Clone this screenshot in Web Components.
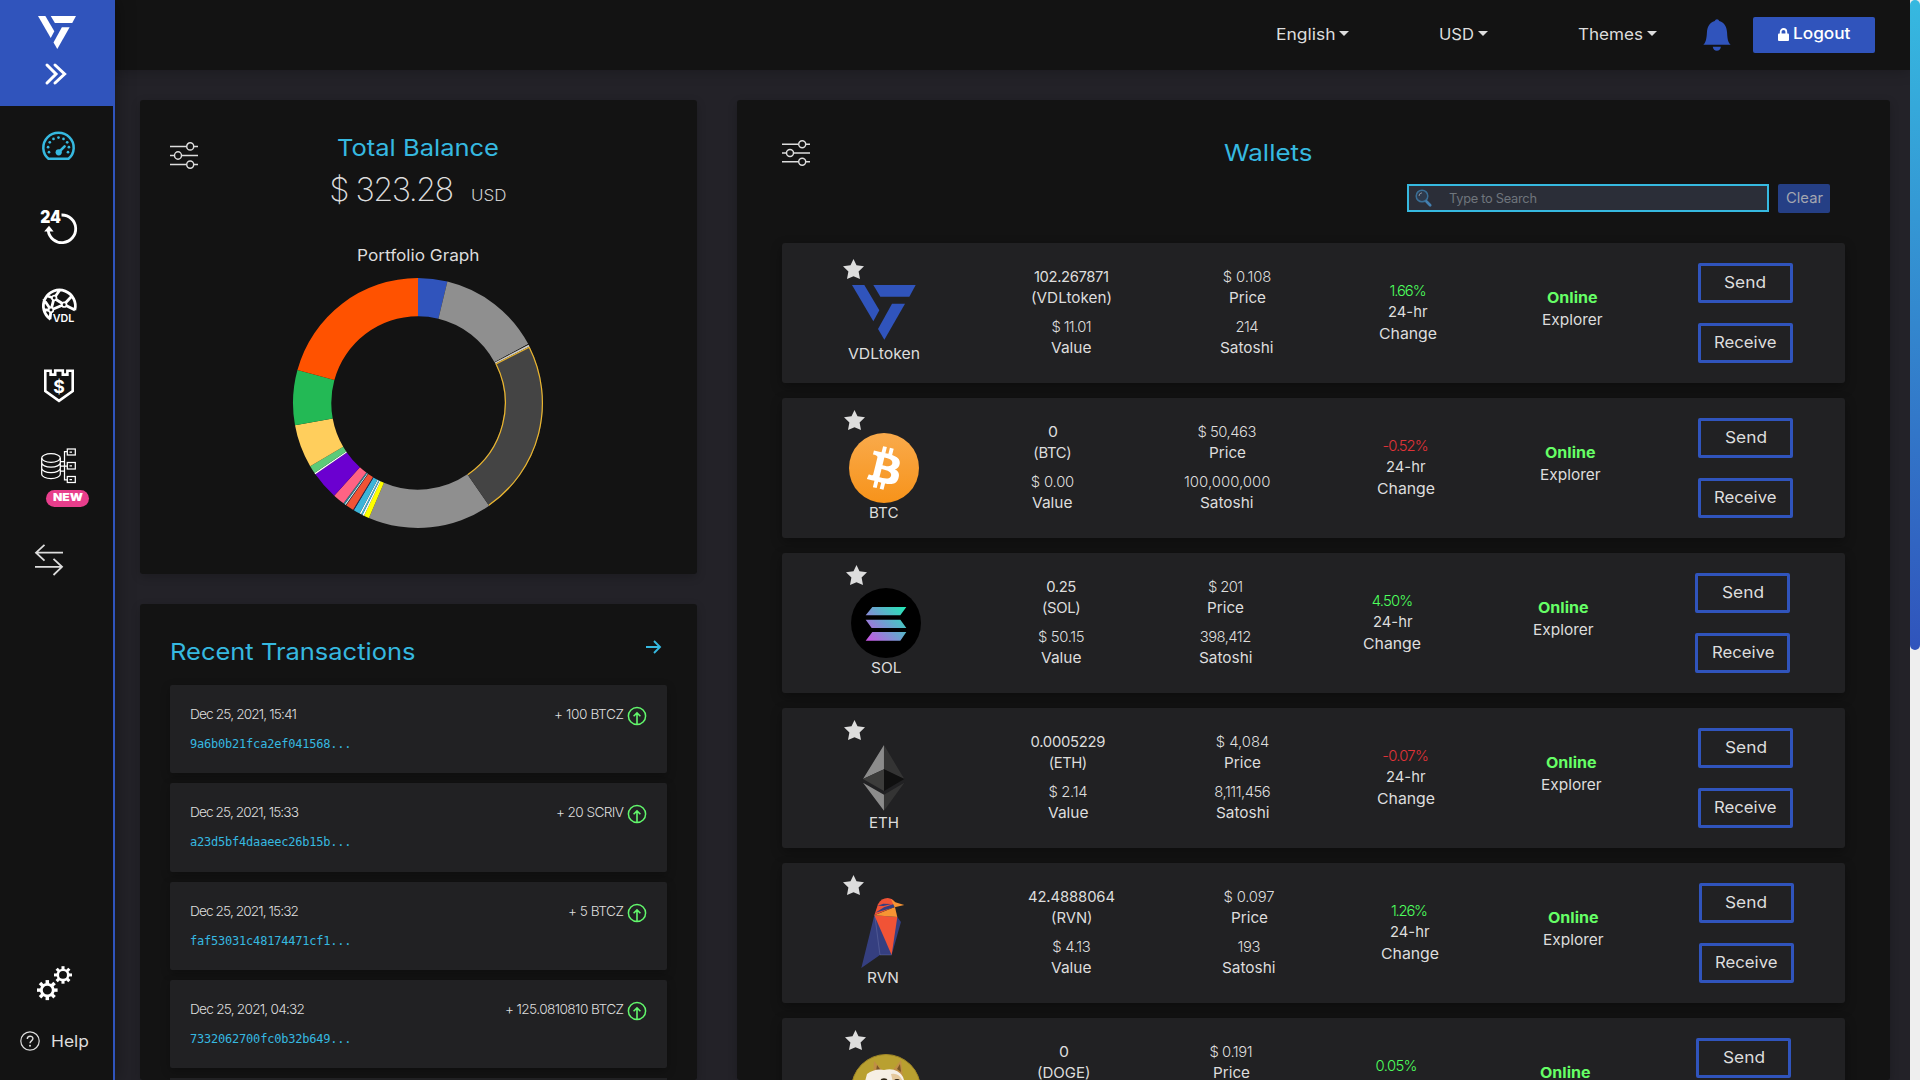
<!DOCTYPE html>
<html lang="en">
<head>
<meta charset="utf-8">
<title>Wallet dashboard</title>
<style>
html,body{margin:0;height:1080px;overflow:hidden;background:#232228}
body{font-family:Inter,"Open Sans",sans-serif;color:#ddd}
</style>
</head>
<body>
<wallet-app></wallet-app>
<script>
const vdl = c => `<g fill="${c}"><path d="M97 136H134L179 212L161 245Z"/><path d="M161 136H288L269 171H182Z"/><path d="M217 192H256L194 300L175 268Z"/></g>`;
const gear = (cx, cy, r) => {
  let t = '';
  for (let i = 0; i < 8; i++) t += `<rect x="${cx - r * .17}" y="${cy - r}" width="${r * .34}" height="${r * .4}" transform="rotate(${i * 45} ${cx} ${cy})"/>`;
  return `<g fill="#fff">${t}</g><circle cx="${cx}" cy="${cy}" r="${r * .58}" fill="none" stroke="#fff" stroke-width="${r * .28}"/>`;
};
const dots = [];
for (let i = 0; i < 9; i++) {
  const a = (i * 28.5 - 114) * Math.PI / 180;
  dots.push(`<circle cx="${(16.5 + 10.4 * Math.sin(a)).toFixed(1)}" cy="${(16 - 10.4 * Math.cos(a)).toFixed(1)}" r="1.35"/>`);
}
const ICONS = {
  logo: ['97 136 191 164', vdl('#fff')],
  VDLtoken: ['97 136 191 164', vdl('#3054bc')],
  chevrons: ['0 0 22 22', '<path d="M2 2L11 11L2 20M10 2L19.6 11L10 20" fill="none" stroke="#fff" stroke-width="3" stroke-linecap="round" stroke-linejoin="miter"/>'],
  gauge: ['0 0 33 29', `<path d="M6.5 26.8A15.2 14.8 0 1 1 26.5 26.8Z" fill="none" stroke="#36b9e0" stroke-width="2.5" stroke-linejoin="round"/><g fill="#36b9e0">${dots.join('')}<circle cx="16.7" cy="20.3" r="3.1"/></g><path d="M17 20L22.6 14.4" stroke="#36b9e0" stroke-width="2.6" stroke-linecap="round"/>`],
  day: ['0 0 35 34', '<text x="-.8" y="12.6" font-family="Inter" font-weight="900" font-size="17" textLength="20.8" lengthAdjust="spacingAndGlyphs" fill="#fff">24</text><path d="M20.5 5A13.8 13.8 0 1 1 7.2 20.5" fill="none" stroke="#fff" stroke-width="2.8"/><path d="M3.2 21.500L8 15.800L12.600 21.500Z" fill="#fff"/>'],
  net: ['0 0 35 33', '<g fill="none" stroke="#fff" stroke-width="2.4"><path d="M9.5 30.300A16 16 0 1 1 33.800 21.200M5 6.500L13 9.300M13 9.300L18.500 1.500M13 9.300L10 21M2 21L10 21M13 9.300L23 15.500L34 21M23 15.500L30 8M10 21L23 15.500M10 21L9 30M2.500 10L10 21" stroke-width="2.800"/></g><g fill="#131313" stroke="#fff" stroke-width="1.700"><circle cx="13.200" cy="9" r="2.300"/><circle cx="23.200" cy="15.700" r="2.300"/><circle cx="10" cy="21" r="2.300"/></g><text x="11.700" y="32.600" font-family="Inter" font-weight="600" font-size="10.800" textLength="21.500" lengthAdjust="spacingAndGlyphs" fill="#fff">VDL</text>'],
  shield: ['0 0 30 34', '<path d="M1.3 1.8H6.6V5.6H11.2V1.5H18.8V5.6H23.4V1.8H28.7V22L15 31.8L1.3 22Z" fill="none" stroke="#fff" stroke-width="2.6"/><text x="9.200" y="23.600" textLength="11.600" lengthAdjust="spacingAndGlyphs" font-family="Inter" font-weight="700" font-size="17.500" fill="#fff">$</text>'],
  db: ['0 0 35 36', '<g fill="none" stroke="#fff" stroke-width="1.25"><ellipse cx="10" cy="10" rx="9.3" ry="4.3"/><path d="M.7 10V26.2C.7 28.600 4.900 30.500 10 30.500S19.300 28.600 19.300 26.200V10M.7 14.800C.7 17.200 4.900 19.100 10 19.100S19.300 17.200 19.300 14.800M.7 20.300C.7 22.700 4.900 24.600 10 24.600S19.300 22.700 19.300 20.300M19.300 13.500H23.500M19.300 23H23.500M26.500 3.700H23.500V31.800H26.500M19.300 18H26.500"/><rect x="26.300" y="1" width="8" height="6"/><rect x="26.300" y="14.500" width="8" height="6.500"/><rect x="26.300" y="28.500" width="8" height="6"/><path d="M28.500 4H31M28.500 17.800H31M28.500 31.500H31"/></g>'],
  swap: ['0 0 28 32', '<path d="M28 8.700H1.200M9.500 .8L1 8.700L9.500 16.700M0 22.800H27M18.500 14.800L27 22.800L18.500 31" fill="none" stroke="#ddd" stroke-width="1.800"/>'],
  gears: ['0 0 35 36', gear(26, 9.2, 9) + gear(10.300, 24.800, 10.300)],
  help: ['0 0 20 20', '<circle cx="10" cy="10" r="9.200" fill="none" stroke="#ddd" stroke-width="1.200"/><path d="M7.300 8C7.300 4.300 12.900 4.400 12.900 7.600C12.900 9.800 10 9.900 10 12.200" fill="none" stroke="#ddd" stroke-width="1.400"/><circle cx="10" cy="14.700" r="1" fill="#ddd"/>'],
  bell: ['908 56 86 98', '<path fill="#3054bc" d="M951 57q5 0 7 5C975 68 981 80 982 98C983 120 986 128 993 135H909C916 128 919 118 920 98C921 80 927 68 944 62Q946 57 951 57ZM938 141h25q-2 12 -12.500 12t-12.500 -12Z"/>'],
  lock: ['0 0 11 13', '<path d="M2.700 6V3.800A2.800 2.800 0 0 1 8.300 3.800V6" fill="none" stroke="#fff" stroke-width="1.800"/><rect y="5.500" width="11" height="7.500" rx="1" fill="#fff"/>'],
  sliders: ['0 0 28 26', '<g fill="none" stroke="#ddd" stroke-width="1.450"><path d="M0 4.300H16.500M23.500 4.300H28M0 13H4.500M11.500 13H28M0 21.700H16.500M23.500 21.700H28"/><circle cx="20.200" cy="4.300" r="3.500"/><circle cx="8" cy="13" r="3.500"/><circle cx="20.200" cy="21.700" r="3.500"/></g>'],
  arrow: ['0 0 15 14', '<path d="M0 7H13.800M8 1L14 7L8 13" fill="none" stroke="#36b9e0" stroke-width="1.900"/>'],
  up: ['0 0 20 20', '<circle cx="10" cy="10" r="8.600" fill="none" stroke="#62f76c" stroke-width="1.500"/><path d="M10 19V7.400M6.600 10.200L10 6.900L13.400 10.200" fill="none" stroke="#62f76c" stroke-width="1.600"/>'],
  search: ['0 0 17 18', '<circle cx="7" cy="7" r="5.800" fill="#2e3a4c" stroke="#3a6f96" stroke-width="1.500"/><path d="M4 7Q4.200 4 7 3.800" stroke="#8c939c" fill="none"/><path d="M11.500 12.500L15.200 16.300" stroke="#437fb0" stroke-width="2.700" stroke-linecap="round"/>'],
  star: ['0 0 21 20', '<path fill="#ddd" d="M10.500 0L13.500 6.300L21 7.300L15.600 12.400L17 20L10.500 17.200L4 20L5.400 12.400L0 7.300L7.500 6.300Z"/>'],
  BTC: ['0 0 32 32', '<defs><linearGradient id="b" x2="0" y2="1"><stop stop-color="#f9aa4b"/><stop offset="1" stop-color="#f7931a"/></linearGradient></defs><circle cx="16" cy="16" r="16" fill="url(#b)"/><path fill="#fff" d="M23.189 14.020c.314-2.096-1.283-3.223-3.465-3.975l.708-2.840-1.728-.430-.690 2.765c-.454-.114-.920-.220-1.385-.326l.695-2.783L15.596 6l-.708 2.839c-.376-.086-.746-.170-1.104-.260l.002-.009-2.384-.595-.460 1.846s1.283.294 1.256.312c.700.175.826.638.805 1.006l-.806 3.235c.048.012.110.030.180.057l-.183-.045-1.130 4.532c-.086.212-.303.531-.793.410.018.025-1.256-.313-1.256-.313l-.858 1.978 2.250.561c.418.105.828.215 1.231.318l-.715 2.872 1.727.430.708-2.840c.472.127.930.245 1.378.357l-.706 2.828 1.728.430.715-2.866c2.948.558 5.164.333 6.097-2.333.752-2.146-.037-3.385-1.588-4.192 1.130-.260 1.980-1.003 2.207-2.538zm-3.950 5.538c-.533 2.147-4.148.986-5.320.695l.950-3.805c1.172.293 4.929.872 4.370 3.110zm.535-5.569c-.487 1.953-3.495.960-4.470.717l.860-3.450c.975.243 4.118.696 3.610 2.733z"/>'],
  SOL: ['93 1044 210 210', '<defs><linearGradient id="s" gradientUnits="userSpaceOnUse" x1="140" y1="1210" x2="256" y2="1096"><stop stop-color="#d04fe6"/><stop offset=".5" stop-color="#6f9fd0"/><stop offset="1" stop-color="#1eecb4"/></linearGradient></defs><circle cx="198" cy="1149" r="105"/><path fill="url(#s)" d="M157 1101H259L241 1126H137ZM137 1139H241L259 1164H155ZM157 1176H259L241 1202H137Z"/>'],
  ETH: ['129 -45 124 197', '<path fill="#8c8c8c" d="M192 -45L129 57L192 28ZM129 68L192 104V152Z"/><path fill="#343434" d="M192 -45L253 57L192 28ZM253 68L192 104V152Z"/><path fill="#3c3c3b" d="M129 57L192 28V93Z"/><path fill="#101010" d="M253 57L192 28V93Z"/>'],
  RVN: ['123 413 130 211', '<path fill="#353f80" d="M163 465L124 623L180 584H215L243 485L232 470Z"/><path fill="#f15336" d="M163 465L232 470L215 584Z"/><path fill="#f79433" d="M163 465L225 440L232 470Z"/><path fill="#f15336" d="M163 465L174 432Q184 413 203 413Q218 414 226 427L222 440Z"/><path fill="#353f80" d="M166 457L192 441L224 430L223 441ZM173 436L190 430L215 431L190 437Z"/><path fill="#f79433" d="M213 416L226 426L253 434L224 441Z"/><path stroke="#8089b8" fill="none" d="M165 470L180 584L215 584"/>'],
  DOGE: ['0 0 70 70', '<circle cx="35" cy="35" r="34.500" fill="#b9a030" stroke="#a08727"/><path fill="#c08e45" d="M22 23L23 7L33 18ZM42 16L50 6L52 24Z"/><path fill="#7a5524" d="M25 17L26 11L31 18ZM46 15L49 10L50 18Z"/><path fill="#f6efe4" d="M12 35L16 20Q24 14 33 16Q46 13 52 23L56 35L58 60H12Z"/><path fill="#d3a153" d="M40 20Q49 18 53 30L53 36L44 36Z" opacity=".5"/><ellipse cx="33" cy="26.500" rx="3.500" ry="2.300" fill="#2d2212"/><ellipse cx="46" cy="27" rx="3" ry="2" fill="#2d2212"/>']
};

/* <ui-icon name w h>: one drawing out of the set above */
customElements.define('ui-icon', class extends HTMLElement {
  connectedCallback() {
    if (this.shadowRoot) return;
    const [vb, body] = ICONS[this.getAttribute('name')];
    const w = this.getAttribute('w'), h = this.getAttribute('h');
    this.attachShadow({mode: 'open'}).innerHTML = `<style>:host{display:block;flex:none;width:${w}px;height:${h}px}svg{display:block;overflow:visible}</style><svg width="${w}" height="${h}" viewBox="${vb}" preserveAspectRatio="none">${body}</svg>`;
  }
});

/* <fit-text w>: a single line set to a fixed measure, widened when it is short and tracked when it is long */
customElements.define('fit-text', class extends HTMLElement {
  connectedCallback() {
    if (this.shadowRoot) return;
    this.attachShadow({mode: 'open'}).innerHTML = `<style>:host{display:inline-block;white-space:nowrap;text-align:left}span{display:inline-block;transform-origin:0 50%}</style><span><slot></slot></span>`;
    const s = this.shadowRoot.querySelector('span');
    const w = +this.getAttribute('w'), n = this.textContent.length;
    this.style.width = w + 'px';
    const nat = s.getBoundingClientRect().width;
    if (nat < w) {
      s.style.transform = `scaleX(${(w / nat).toFixed(4)})`;
    } else if (n > 1) {
      const ls = (w - nat) / (n - 1);
      s.style.letterSpacing = ls.toFixed(3) + 'px';
      s.style.marginRight = (-ls).toFixed(3) + 'px';
    }
  }
});
const T = (w, t, c = '') => `<fit-text w="${w}" class="${c}">${t}</fit-text>`;
const I = (n, w, h, st = '') => `<ui-icon name="${n}" w="${w}" h="${h}" style="${st}"></ui-icon>`;
const define = (name, html) => customElements.define(name, class extends HTMLElement {
  connectedCallback() {
    if (!this.shadowRoot) this.attachShadow({mode: 'open'}).innerHTML = typeof html === 'function' ? html(this) : html;
  }
});

define('side-bar', `<style>
:host{display:flex;flex-direction:column;box-sizing:border-box;width:115px;height:1080px;background:#131313;border-right:2px solid #3054bc;flex:none;box-shadow:0 0 18px #0006;z-index:2}
.brand{background:#3054bc;height:106px;width:115px;box-sizing:border-box;padding:16px 0 0 38px}
.new{margin:6px 0 0 46px;width:43px;height:17px;border-radius:9px;background:#e83e8c;color:#fff;font:900 10.800px/16.500px Inter;text-align:center}
.help{display:flex;align-items:center;gap:11px;margin:30px 0 29px 20px;font-size:16.500px;height:20px}
</style>
<div class="brand">${I('logo', 38, 33)}${I('chevrons', 22, 22, 'margin:14px 0 0 7px')}</div>
${I('gauge', 33, 29, 'margin:25.500px 0 0 42px')}
${I('day', 35, 34, 'margin:49.500px 0 0 41px')}
${I('net', 35, 33, 'margin:45px 0 0 40.500px')}
${I('shield', 30, 34, 'margin:46.500px 0 0 43.500px')}
${I('db', 35, 36, 'margin:45.500px 0 0 41px')}
<div class="new">${T(30, 'NEW')}</div>
${I('swap', 28, 32, 'margin:37px 0 0 35px')}
${I('gears', 35, 35, 'margin:auto 0 0 37px')}
<div class="help">${I('help', 20, 20)}${T(38, 'Help')}</div>`);

define('menu-pick', el => `<style>:host{display:flex;align-items:center;gap:4px;font-size:16px;line-height:20px}
i{width:0;height:0;border:5px solid transparent;border-top-color:#ddd;border-bottom:0;margin-top:-1px}</style>${T(el.getAttribute('w'), el.getAttribute('label'))}<i></i>`);

define('top-bar', `<style>
:host{display:flex;box-sizing:border-box;height:70px;background:#131313;padding:0 35px 0 1160.500px;align-items:center;box-shadow:0 0 14px #0004}
menu-pick{margin-top:-2px}
button{margin-left:22px;width:122px;height:36px;border:0;border-radius:2px;background:#3054bc;color:#fff;font:500 15.800px/20px Inter;display:flex;align-items:center;padding:0 0 2px 25px;gap:4px}
</style>
<menu-pick w="59.500" label="English"></menu-pick>
<menu-pick w="35" label="USD" style="margin-left:89.500px"></menu-pick>
<menu-pick w="65" label="Themes" style="margin-left:90px"></menu-pick>
${I('bell', 28, 32, 'margin-left:46px')}
<button>${I('lock', 11, 13)}${T(57.500, 'Logout')}</button>`);

define('dash-card', `<style>:host{display:block;box-sizing:border-box;background:#131313;border-radius:3px;box-shadow:0 3px 10px #0003}</style><slot></slot>`);

define('portfolio-donut', () => {
  const segs = [[0,13.600,'#3054bc'],[13.600,61.900,'#8f8f8f'],[61.900,62.200,'#131313'],[62.200,63.100,'#ccc'],[145.300,203.100,'#8f8f8f'],[63.400,145.300,'#444','#edb72d'],[203.100,205.600,'#ffff00'],
  [205.600,206.400,'#fff'],[206.400,207.100,'#3cb4d8'],[207.100,207.800,'#fff'],[207.800,210.900,'#3cb4d8'],[210.900,211.300,'#252a5c'],[211.300,215.100,'#f15336'],[215.100,215.400,'#252a5c'],[215.400,215.900,'#dff'],[215.900,216.600,'#2f7f91'],
  [216.600,222.100,'#ff6384'],[222.100,235.200,'#6b00d0'],[235.200,235.900,'#fff'],[235.900,239.600,'#5ccb78'],[239.600,259.700,'#ffce5c'],[259.700,285.300,'#23b955'],[285.300,360,'#ff5200']];
  const p = (r, a) => { a *= Math.PI / 180; return (126 + r * Math.sin(a)).toFixed(2) + ' ' + (126 - r * Math.cos(a)).toFixed(2); };
  const R = 125, r = 86.700;
  return `<style>:host{display:block;width:252px;height:252px}svg{display:block}</style><svg width="252" height="252">` +
    segs.map(([a, b, f, s]) => {
      const q = s ? .6 : 0, O = R - q, N = r + q;
      const edge = s ? `<path d="M${p(O, b)}A${O} ${O} 0 0 0 ${p(O, a)}L${p(N, a)}A${N} ${N} 0 0 1 ${p(N, b)}" fill="none" stroke="${s}" stroke-width="1.200"/>` : '';
      return `<path d="M${p(R, a)}A${R} ${R} 0 0 1 ${p(R, b)}L${p(r, b)}A${r} ${r} 0 0 0 ${p(r, a)}Z" fill="${f}"/>${edge}`;
    }).join('') + '</svg>';
});

define('balance-panel', `<style>
:host{display:flex;height:474px;box-sizing:border-box;padding:0 30px}
.mid{flex:1;display:flex;flex-direction:column;align-items:center;margin-right:29px}
.h{font-size:23.500px;line-height:30px;color:#36b9e0;margin-top:33px}
.sum{display:flex;align-items:baseline;gap:17px;line-height:40px;margin-top:7px}
.big{font-size:32.500px;font-weight:200}.usd{font-size:16px;font-weight:300;color:#ccc}
.pg{font-size:16px;line-height:20px;margin:30px 0 22px}
portfolio-donut{margin-top:-10px}
</style>
${I('sliders', 28, 27, 'margin-top:42px')}
<div class="mid"><div class="h">${T(162, 'Total Balance')}</div>
<div class="sum">${T(125, '$ 323.28', 'big')}${T(35.500, 'USD', 'usd')}</div>
<div class="pg">${T(122.500, 'Portfolio Graph')}</div><portfolio-donut></portfolio-donut></div>`);

define('tx-row', el => `<style>
:host{display:block;box-sizing:border-box;height:88.330px;margin-bottom:10px;background:#212123;border-radius:2px;padding:19px 20px 0 20px;box-shadow:0 3px 10px #0004}
.l{display:flex;align-items:center;height:20px;font-size:13.700px;font-weight:300}
.sp{flex:1}.hash{font:12px/20px "DejaVu Sans Mono",monospace;color:#36b9e0;margin-top:10px}
</style><div class="l">${T(+el.getAttribute('dw') + 1, el.getAttribute('date'))}<span class="sp"></span>${T(+el.getAttribute('aw') + 1, el.getAttribute('amount'))}${I('up', 20, 20, 'margin:4px 0 0 3px')}</div>
<div class="hash">${T(161.500, el.getAttribute('hash'))}</div>`);

define('recent-panel', `<style>
:host{display:block;padding:0 30px;height:476px;overflow:hidden}
.t{display:flex;justify-content:space-between;height:81px;padding:0 6px 0 0}
.h{font-size:23.500px;line-height:30px;color:#36b9e0;margin-top:33px}
</style>
<div class="t"><div class="h">${T(245.500, 'Recent Transactions')}</div>${I('arrow', 15, 14, 'margin-top:36px')}</div>
<tx-row date="Dec 25, 2021, 15:41" dw="106" amount="+ 100 BTCZ" aw="69" hash="9a6b0b21fca2ef041568..."></tx-row>
<tx-row date="Dec 25, 2021, 15:33" dw="108" amount="+ 20 SCRIV" aw="67" hash="a23d5bf4daaeec26b15b..."></tx-row>
<tx-row date="Dec 25, 2021, 15:32" dw="108" amount="+ 5 BTCZ" aw="55" hash="faf53031c48174471cf1..."></tx-row>
<tx-row date="Dec 25, 2021, 04:32" dw="114" amount="+ 125.0810810 BTCZ" aw="118" hash="7332062700fc0b32b649..."></tx-row>
<div style="height:2px;background:#212123"></div>`);

/* x: column centres measured from the left edge of the row */
const WALLETS = [
  {n:'VDLtoken', nw:72, ic:[63.700,54.700], pad:[42,4], star:16, x:[102,289.500,465,626,790.700,963.500], a:['102.267871',75,'(VDLtoken)',81,'$ 11.01',40,'Value',40], p:['$ 0.108',48.500,'214',23], c:['1.66%',37]},
  {n:'BTC', nw:29.500, ic:[70,70], pad:[35,0], star:12, sx:.5, x:[102,270.500,445,623.500,788.500,963.500], a:['0',10,'(BTC)',38.500,'$ 0.00',43.500,'Value',40], p:['$ 50,463',59,'100,000,000',86.500], c:['-0.52%',46]},
  {n:'SOL', nw:30.500, ic:[70,70], pad:[35,0], star:12, sx:.8, x:[104,279.300,443.500,610.500,781,961], a:['0.25',30,'(SOL)',38.500,'$ 50.15',46.500,'Value',40], p:['$ 201',35,'398,412',51.500], c:['4.50%',41.500]},
  {n:'ETH', nw:30, ic:[41.300,65.700], pad:[37,2.300], star:12, sx:.5, x:[102,286,460.500,623.500,789,963.500], a:['0.0005229',75,'(ETH)',38.500,'$ 2.14',39,'Value',40], p:['$ 4,084',53.500,'8,111,456',56.500], c:['-0.07%',46.500]},
  {n:'RVN', nw:32, ic:[43.300,70.300], pad:[34.700,0], star:12, sx:.8, x:[101,289.500,467,627.500,791.300,964.500], a:['42.4888064',87,'(RVN)',41.500,'$ 4.13',38.500,'Value',40], p:['$ 0.097',51,'193',23], c:['1.26%',37]},
  {n:'DOGE', ic:[70,70], pad:[36,0], star:12, x:[104,281.500,449,614.500,783.500,961.500], a:['0',10,'(DOGE)',53.500], p:['$ 0.191',43], c:['0.05%',42]}
];
define('wallet-row', el => {
  const d = WALLETS[el.getAttribute('index')], W = [90, 110, 110, 90, 90, 95];
  let edge = 0;
  const cell = (i, cls, html) => {
    const left = d.x[i] - W[i] / 2, m = left - edge;
    edge = left + W[i];
    return `<div class="${cls}" style="width:${W[i]}px;margin-left:${m.toFixed(2)}px">${html}</div>`;
  };
  const last = !d.nw;
  return `<style>
:host{display:flex;height:140px;margin-bottom:15px;background:#212123;border-radius:3px;box-shadow:0 4px 12px #0005;font-size:14.800px;line-height:21px}
div{flex:none}.c{display:flex;flex-direction:column;align-items:center}
.logo{position:relative}.logo .s{position:absolute}
.two{padding-top:24px}.g{height:8px}.lt{font-weight:300}
.chg{padding-top:37.500px}.chg fit-text:nth-child(3){margin-top:1px}.up{color:#4dff5d}.dn{color:#e03338}
.on{padding-top:44.500px}.on b{color:#66ff66;font-weight:700}.ex{margin-top:1px}
.btn{padding-top:20px;gap:20px}
button{box-sizing:border-box;width:95px;height:40px;border:3px solid #3054bc;border-radius:2px;background:none;color:#ddd;font:400 15.800px/20px Inter;padding:0 0 1px}
</style>` +
  cell(0, 'c logo', `<div class="s" style="left:${4 + (d.sx || 0)}px;top:${d.star}px">${I('star', 21, 20)}</div>${I(d.n, d.ic[0], d.ic[1], `margin-top:${d.pad[0]}px`)}${last ? '' : `<div style="margin-top:${d.pad[1]}px">${T(d.nw, d.n)}</div>`}`) +
  cell(1, 'c two', T(d.a[1], d.a[0]) + T(d.a[3], d.a[2]) + (last ? '' : `<div class="g"></div>` + T(d.a[5], d.a[4], 'lt') + T(40.500, 'Value'))) +
  cell(2, 'c two', T(d.p[1], d.p[0], 'lt') + T(37, 'Price') + (last ? '' : `<div class="g"></div>` + T(d.p[3], d.p[2], 'lt') + T(53.500, 'Satoshi'))) +
  cell(3, 'c chg', T(d.c[1], d.c[0], 'lt ' + (d.c[0][0] === '-' ? 'dn' : 'up')) + (last ? '' : T(39.500, '24-hr') + T(58, 'Change'))) +
  cell(4, 'c on', `<b>${T(50.500, 'Online')}</b>` + (last ? '' : T(60.500, 'Explorer', 'ex'))) +
  cell(5, 'c btn', `<button>${T(42, 'Send')}</button>` + (last ? '' : `<button>${T(62.500, 'Receive')}</button>`));
});

define('wallets-panel', `<style>
:host{display:block;padding:0 45px;height:980px;overflow:hidden}
.t{display:flex;height:84px;align-items:flex-start}
.h{font-size:23.500px;line-height:30px;color:#36b9e0;margin:38px 0 0 414px}
.f{display:flex;justify-content:flex-end;padding-right:15px;gap:9px;height:59px}
.box{box-sizing:border-box;width:362px;height:28px;border:2px solid #36b9e0;background:#2b2e38;display:flex;align-items:center;color:#6f757c;font-size:12.800px;padding-left:6px}
.box fit-text{margin-left:17px}
button{width:52px;height:29px;padding:0 0 1px;border:0;border-radius:2px;background:#253f85;color:#a3a6b0;font:400 14.500px/20px Inter}
</style>
<div class="t">${I('sliders', 28, 26, 'margin-top:40px')}<div class="h">${T(88.500, 'Wallets')}</div></div>
<div class="f"><div class="box">${I('search', 17, 18)}${T(88, 'Type to Search')}</div><button>${T(37, 'Clear')}</button></div>
${WALLETS.map((_, i) => `<wallet-row index="${i}"></wallet-row>`).join('')}`);

define('scroll-rail', `<style>:host{display:block;width:10px;height:1080px;background:#eee;flex:none}
div{height:650px;border-radius:5px;background:linear-gradient(#36b9e0,#3054bc)}</style><div></div>`);

define('wallet-app', `<style>
:host{display:flex;width:1920px;height:1080px;overflow:hidden;background:#232228}
main{width:1795px;flex:none}
.cols{display:flex;gap:40px;padding:30px 20px 0 25px}
.l{width:557px;display:flex;flex-direction:column;gap:30px}
.r{width:1153px}
</style>
<side-bar></side-bar>
<main><top-bar></top-bar>
<div class="cols"><div class="l"><dash-card><balance-panel></balance-panel></dash-card><dash-card><recent-panel></recent-panel></dash-card></div>
<div class="r"><dash-card><wallets-panel></wallets-panel></dash-card></div></div></main>
<scroll-rail></scroll-rail>`);
</script>
</body>
</html>
